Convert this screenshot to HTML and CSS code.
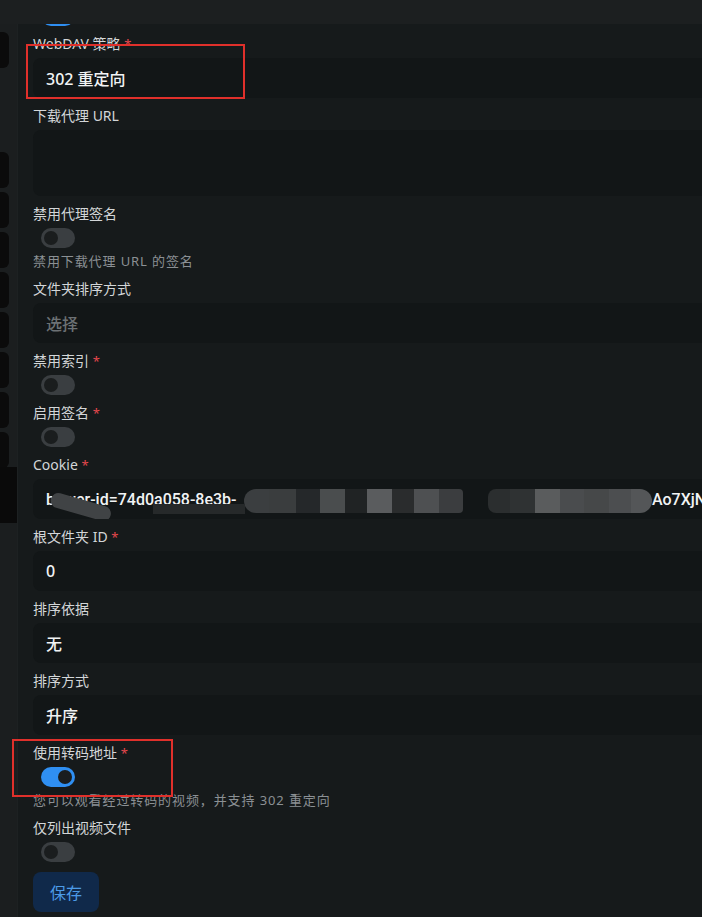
FILE: index.html
```html
<!DOCTYPE html>
<html lang="zh-CN">
<head>
<meta charset="utf-8">
<title>存储设置</title>
<link rel="stylesheet" href="styles.css">
</head>
<body>
<header class="topbar"></header>
<div class="layout">
  <aside class="sidebar">
    <div class="nav-item"></div>
    <div class="nav-spacer"></div>
    <div class="nav-item"></div>
    <div class="nav-item"></div>
    <div class="nav-item"></div>
    <div class="nav-item"></div>
    <div class="nav-item"></div>
    <div class="nav-item"></div>
    <div class="nav-item"></div>
    <div class="nav-item"></div>
    <div class="nav-item active"></div>
  </aside>
  <main class="main">
    <form class="form">
      <div class="switch on first"><span class="knob"></span></div>

      <div class="field">
        <label class="label">WebDAV 策略 <span class="req">*</span></label>
        <div class="input value">302 重定向</div>
      </div>

      <div class="field">
        <label class="label">下载代理 URL</label>
        <div class="input textarea"></div>
      </div>

      <div class="field">
        <label class="label">禁用代理签名</label>
        <div class="switch"><span class="knob"></span></div>
        <p class="helper">禁用下载代理 URL 的签名</p>
      </div>

      <div class="field">
        <label class="label">文件夹排序方式</label>
        <div class="input placeholder">选择</div>
      </div>

      <div class="field">
        <label class="label">禁用索引 <span class="req">*</span></label>
        <div class="switch"><span class="knob"></span></div>
      </div>

      <div class="field">
        <label class="label">启用签名 <span class="req">*</span></label>
        <div class="switch"><span class="knob"></span></div>
      </div>

      <div class="field">
        <label class="label">Cookie <span class="req">*</span></label>
        <div class="input value cookie">
          <span class="cookie-head">bower-id=74d0a058-8e3b-</span>
          <span class="redacted">
            <span class="px c1 first"></span>
            <span class="px c2"></span>
            <span class="px c3"></span>
            <span class="px c4"></span>
            <span class="px c5"></span>
            <span class="px c6"></span>
            <span class="px c7"></span>
            <span class="px c8"></span>
            <span class="px c9"></span>
            <span class="px c10"></span>
            <span class="px c11"></span>
            <span class="px c12"></span>
            <span class="px c13"></span>
            <span class="px c14"></span>
            <span class="px c15"></span>
            <span class="px c16"></span>
            <span class="px c17 last"></span>
          </span>
          <span class="cookie-tail">Ao7XjN2LkQ9w</span>
          <span class="swoosh"></span>
          <span class="underband"></span>
        </div>
      </div>

      <div class="field">
        <label class="label">根文件夹 ID <span class="req">*</span></label>
        <div class="input value">0</div>
      </div>

      <div class="field">
        <label class="label">排序依据</label>
        <div class="input value">无</div>
      </div>

      <div class="field">
        <label class="label">排序方式</label>
        <div class="input value">升序</div>
      </div>

      <div class="field">
        <label class="label">使用转码地址 <span class="req">*</span></label>
        <div class="switch on"><span class="knob"></span></div>
        <p class="helper">您可以观看经过转码的视频，并支持 302 重定向</p>
      </div>

      <div class="field">
        <label class="label">仅列出视频文件</label>
        <div class="switch"><span class="knob"></span></div>
      </div>

      <button type="button" class="save">保存</button>
    </form>
  </main>
</div>
<div class="mark mark-1"></div>
<div class="mark mark-2"></div>
</body>
</html>
```

FILE: styles.css
```css
* { box-sizing: border-box; }

html, body {
  margin: 0;
  padding: 0;
  height: 100%;
  overflow: hidden;
  background: #1b1e1f;
  font-family: "Noto Sans", "Noto Sans CJK SC", sans-serif;
  color: #d3d6d8;
}

.topbar {
  position: fixed;
  top: 0;
  left: 0;
  right: 0;
  height: 24px;
  background: #1c1f20;
  z-index: 10;
}

.layout {
  display: flex;
  height: 100%;
}

.sidebar {
  width: 17px;
  flex: none;
  background: #1b1e1f;
  display: flex;
  flex-direction: column;
  gap: 4px;
  padding-top: 32px;
}

.nav-item {
  width: 9px;
  height: 36px;
  background: #0b0b0b;
  border-radius: 0 6px 6px 0;
}

.nav-spacer {
  height: 76px;
}

.nav-item.active {
  width: 17px;
  height: 56px;
  margin-top: -5px;
  border-radius: 0;
  background: #0a0a0a;
}

.main {
  flex: 1;
  background: #161a1b;
  overflow: hidden;
  border-left: 1px solid #1d2122;
}

.form {
  width: 900px;
  padding: 6px 0 0 15px;
  display: flex;
  flex-direction: column;
  gap: 8px;
}

.field {
  display: flex;
  flex-direction: column;
}

.label {
  display: block;
  height: 20px;
  line-height: 20px;
  font-size: 14px;
  color: #d3d6d8;
  margin-bottom: 4px;
  white-space: nowrap;
}

.req {
  color: #e5484d;
  font-size: 13px;
}

.input {
  height: 40px;
  border-radius: 8px;
  background: #121617;
  padding: 0 13px;
  display: flex;
  align-items: center;
  font-size: 16px;
  white-space: nowrap;
  overflow: hidden;
}

.input.value {
  color: #f1f3f4;
  font-weight: 500;
}

.input.placeholder {
  color: #6c7174;
  font-weight: 500;
}

.input.textarea {
  height: 66px;
}

/* Cookie field with redaction */
.cookie {
  position: relative;
  font-family: Roboto, "Noto Sans", sans-serif;
  font-weight: 400;
  color: #f4f5f6;
}

.cookie-head {
  flex: none;
  width: 198px;
}

.redacted {
  flex: none;
  display: flex;
  height: 24px;
  margin-top: 4px;
}

.px {
  flex: none;
  height: 24px;
}
.px.first { border-radius: 12px 0 0 12px; }
.px.last { border-radius: 0 12px 12px 0; }
.c1 { width: 25px; background: #3b3e40; }
.c2 { width: 27px; background: #3a3d3e; }
.c3 { width: 24px; background: #25282a; }
.c4 { width: 25px; background: #4a4d4e; }
.c5 { width: 22px; background: #202324; }
.c6 { width: 25px; background: #5a5c5e; }
.c7 { width: 22px; background: #2a2c2d; }
.c8 { width: 25px; background: #4e5052; }
.c9 { width: 24px; background: #3b3d3f; border-radius: 0 4px 4px 0; }
.c10 { width: 25px; background: transparent; }
.c11 { width: 22px; background: #2b2e2f; border-radius: 8px 0 0 8px; }
.c12 { width: 25px; background: #2f3233; }
.c13 { width: 25px; background: #5a5c5d; }
.c14 { width: 24px; background: #4a4c4e; }
.c15 { width: 25px; background: #464849; }
.c16 { width: 22px; background: #4c4e50; }
.c17 { width: 21px; background: #545658; }

.cookie-tail {
  flex: none;
}

.swoosh {
  position: absolute;
  left: 18px;
  top: 12px;
  width: 62px;
  height: 15px;
  border-radius: 8px;
  background: #404345;
  transform: rotate(16deg);
  transform-origin: left center;
}

.underband {
  position: absolute;
  left: 120px;
  top: 25px;
  width: 92px;
  height: 10px;
  background: #26292a;
}

/* Switches */
.switch {
  width: 34px;
  height: 20px;
  border-radius: 10px;
  background: #3a3e41;
  margin-left: 8px;
  position: relative;
  flex: none;
}

.switch .knob {
  position: absolute;
  top: 3px;
  left: 3px;
  width: 14px;
  height: 14px;
  border-radius: 50%;
  background: #1a1d1e;
}

.switch.on {
  background: #2f8ff2;
}

.switch.on .knob {
  left: 17px;
}

.helper {
  margin: 3px 0 0;
  height: 20px;
  line-height: 20px;
  font-size: 13px;
  letter-spacing: 0.9px;
  color: #8b9094;
  white-space: nowrap;
}

.save {
  align-self: flex-start;
  margin-top: 2px;
  width: 66px;
  height: 40px;
  border: none;
  border-radius: 8px;
  background: #10294a;
  color: #4c9be8;
  font-family: inherit;
  font-size: 16px;
  padding: 0;
}

.mark {
  position: absolute;
  border: 2px solid #e0302b;
  z-index: 20;
}

.mark-1 {
  left: 26px;
  top: 44px;
  width: 219px;
  height: 55px;
}

.mark-2 {
  left: 12px;
  top: 739px;
  width: 161px;
  height: 58px;
}
```
